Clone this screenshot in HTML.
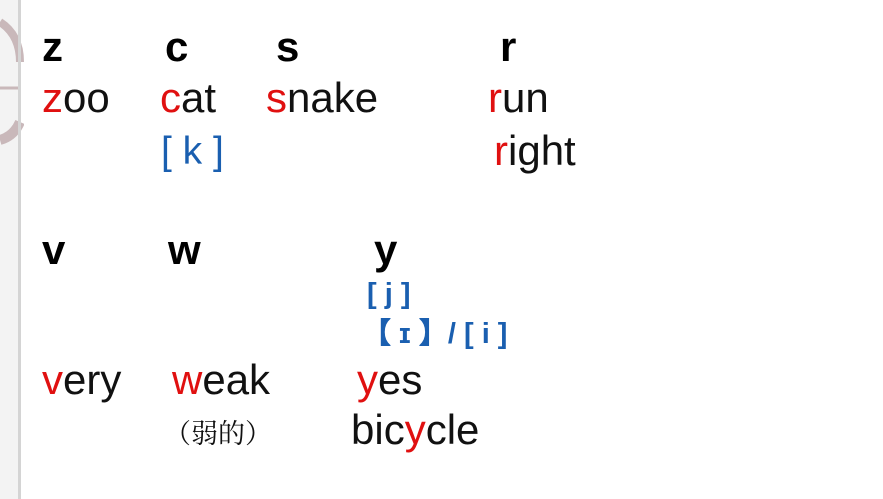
<!DOCTYPE html>
<html><head><meta charset="utf-8"><style>
html,body{margin:0;padding:0;width:883px;height:499px;overflow:hidden;background:#fff}
.t{position:absolute;font-family:"Liberation Sans",Arial,sans-serif;font-size:42px;line-height:1;white-space:nowrap;color:#111}
.b{font-weight:bold;color:#000}
.r{color:#e01010}
.bl{color:#1a5fb0}
.cn{font-family:"Liberation Serif","Noto Serif CJK SC",serif;font-size:27px}
</style></head><body>
<svg style="position:absolute;left:0;top:0" width="24" height="499">
<rect x="0" y="0" width="20" height="499" fill="#f3f3f3"/>
<path d="M0 22 Q20 35 20 62" stroke="#c9b8ba" stroke-width="8" fill="none"/>
<path d="M0 88 L20 88" stroke="#c9b8ba" stroke-width="3"/>
<path d="M0 140 Q14 136 20 122" stroke="#c9b8ba" stroke-width="10" fill="none"/>
<rect x="18" y="0" width="3" height="499" fill="#d4d4d4"/>
</svg>
<div class="t b" style="left:42px;top:26px">z</div>
<div class="t b" style="left:165px;top:26px">c</div>
<div class="t b" style="left:276px;top:26px">s</div>
<div class="t b" style="left:500px;top:26px">r</div>
<div class="t" style="left:42px;top:77px"><span class="r">z</span>oo</div>
<div class="t" style="left:160px;top:77px"><span class="r">c</span>at</div>
<div class="t" style="left:266px;top:77px"><span class="r">s</span>nake</div>
<div class="t" style="left:488px;top:77px"><span class="r">r</span>un</div>
<div class="t bl" style="left:161px;top:132px;font-size:39px">[ k ]</div>
<div class="t" style="left:494px;top:130px"><span class="r">r</span>ight</div>
<div class="t b" style="left:42px;top:229px">v</div>
<div class="t b" style="left:168px;top:229px">w</div>
<div class="t b" style="left:374px;top:229px">y</div>
<div class="t b bl" style="left:367px;top:280px;font-size:29px">[ j ]</div>
<div class="t b bl" style="left:362px;top:320px;font-size:29px">【 ɪ 】/ [ i ]</div>
<div class="t" style="left:42px;top:359px"><span class="r">v</span>ery</div>
<div class="t" style="left:172px;top:359px"><span class="r">w</span>eak</div>
<div class="t" style="left:357px;top:359px"><span class="r">y</span>es</div>
<div class="t cn" style="left:164px;top:421px">（弱的）</div>
<div class="t" style="left:351px;top:409px">bic<span class="r">y</span>cle</div>
</body></html>
